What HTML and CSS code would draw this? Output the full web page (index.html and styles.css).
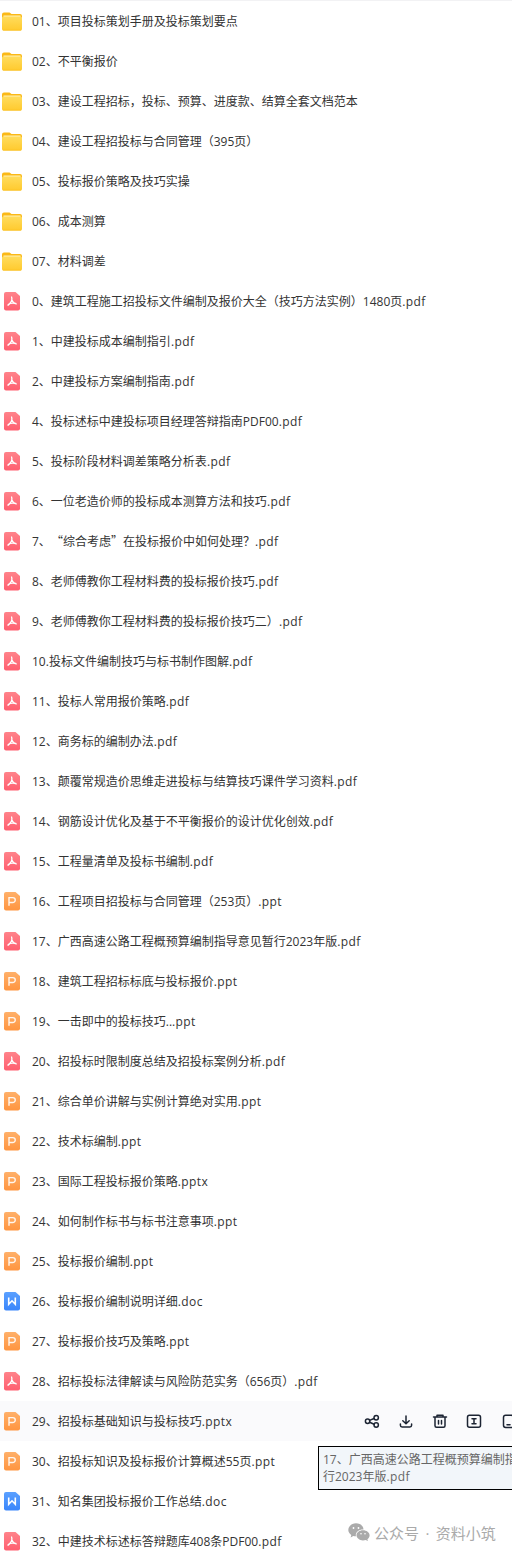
FILE: index.html
```
<!DOCTYPE html>
<html lang="zh-CN">
<head>
    <meta charset="UTF-8">
    <meta name="viewport" content="width=device-width, initial-scale=1.0">
    <title>文件列表</title>
    <link rel="stylesheet" href="styles.css">
</head>
<body>
    <svg class="sprite" aria-hidden="true">
        <defs>
            <linearGradient id="g-folder" x1="0" y1="0" x2="0" y2="1">
                <stop offset="0" stop-color="#ffdc5c"/>
                <stop offset="1" stop-color="#ffca2e"/>
            </linearGradient>
            <linearGradient id="g-pdf" x1="0" y1="0" x2="0" y2="1">
                <stop offset="0" stop-color="#ff838a"/>
                <stop offset="1" stop-color="#ff5f70"/>
            </linearGradient>
            <linearGradient id="g-ppt" x1="0" y1="0" x2="0" y2="1">
                <stop offset="0" stop-color="#ffb069"/>
                <stop offset="1" stop-color="#ff9540"/>
            </linearGradient>
            <linearGradient id="g-doc" x1="0" y1="0" x2="0" y2="1">
                <stop offset="0" stop-color="#5aa0ff"/>
                <stop offset="1" stop-color="#3a86fb"/>
            </linearGradient>
        </defs>
        <symbol id="folder" viewBox="0 0 24 24">
            <path d="M2 5.500q0-2 2-2h5.500l2 1.500H20q2 0 2 2V12H2z" fill="#fbb917"/>
            <path d="M3.500 6.500h17v3h-17z" fill="#fff0b8"/>
            <rect x="2" y="7.500" width="20" height="14" rx="1.500" fill="url(#g-folder)"/>
            <path d="M3 21.200h18" stroke="#fbbd1d" stroke-width=".7"/>
        </symbol>
        <symbol id="pdf" viewBox="0 0 24 24">
            <path d="M6 3h9.500L20 7v12.500a2 2 0 0 1-2 2H6a2 2 0 0 1-2-2V5a2 2 0 0 1 2-2z" fill="url(#g-pdf)"/>
            <path d="M11.600 8c.9 2.500.2 5.200-3.600 8.200M12 11.300c.8 2.200 2 3.200 4.200 3.600M8.200 15.500c2-1.300 4.500-1.700 7.600-1" fill="none" stroke="#fff" stroke-width="1.300" stroke-linecap="round"/>
        </symbol>
        <symbol id="ppt" viewBox="0 0 24 24">
            <path d="M6 3h9.500L20 7v12.500a2 2 0 0 1-2 2H6a2 2 0 0 1-2-2V5a2 2 0 0 1 2-2z" fill="url(#g-ppt)"/>
            <path d="M9 16.800V8.600h3.800a2.400 2.400 0 0 1 0 4.900H9" fill="none" stroke="#fff" stroke-opacity=".9" stroke-width="1.400"/>
        </symbol>
        <symbol id="doc" viewBox="0 0 24 24">
            <path d="M6 3h9.500L20 7v12.500a2 2 0 0 1-2 2H6a2 2 0 0 1-2-2V5a2 2 0 0 1 2-2z" fill="url(#g-doc)"/>
            <path d="M8.700 8.600v6.600L12 11.800l3.300 3.400V8.600" fill="none" stroke="#fff" stroke-width="1.600"/>
        </symbol>
    </svg>

    <div class="pagina">
    <ul class="lista">
        <li class="fila"><svg class="icono"><use href="#folder"/></svg><span class="nombre">01、项目投标策划手册及投标策划要点</span></li>
        <li class="fila"><svg class="icono"><use href="#folder"/></svg><span class="nombre">02、不平衡报价</span></li>
        <li class="fila"><svg class="icono"><use href="#folder"/></svg><span class="nombre">03、建设工程招标，投标、预算、进度款、结算全套文档范本</span></li>
        <li class="fila"><svg class="icono"><use href="#folder"/></svg><span class="nombre">04、建设工程招投标与合同管理（395页）</span></li>
        <li class="fila"><svg class="icono"><use href="#folder"/></svg><span class="nombre">05、投标报价策略及技巧实操</span></li>
        <li class="fila"><svg class="icono"><use href="#folder"/></svg><span class="nombre">06、成本测算</span></li>
        <li class="fila"><svg class="icono"><use href="#folder"/></svg><span class="nombre">07、材料调差</span></li>
        <li class="fila"><svg class="icono"><use href="#pdf"/></svg><span class="nombre">0、建筑工程施工招投标文件编制及报价大全（技巧方法实例）1480页<span class="ext">.pdf</span></span></li>
        <li class="fila"><svg class="icono"><use href="#pdf"/></svg><span class="nombre">1、中建投标成本编制指引<span class="ext">.pdf</span></span></li>
        <li class="fila"><svg class="icono"><use href="#pdf"/></svg><span class="nombre">2、中建投标方案编制指南<span class="ext">.pdf</span></span></li>
        <li class="fila"><svg class="icono"><use href="#pdf"/></svg><span class="nombre">4、投标述标中建投标项目经理答辩指南PDF00<span class="ext">.pdf</span></span></li>
        <li class="fila"><svg class="icono"><use href="#pdf"/></svg><span class="nombre">5、投标阶段材料调差策略分析表<span class="ext">.pdf</span></span></li>
        <li class="fila"><svg class="icono"><use href="#pdf"/></svg><span class="nombre">6、一位老造价师的投标成本测算方法和技巧<span class="ext">.pdf</span></span></li>
        <li class="fila"><svg class="icono"><use href="#pdf"/></svg><span class="nombre">7、<span class="cjk">“综合考虑”</span>在投标报价中如何处理？<span class="ext">.pdf</span></span></li>
        <li class="fila"><svg class="icono"><use href="#pdf"/></svg><span class="nombre">8、老师傅教你工程材料费的投标报价技巧<span class="ext">.pdf</span></span></li>
        <li class="fila"><svg class="icono"><use href="#pdf"/></svg><span class="nombre">9、老师傅教你工程材料费的投标报价技巧二）<span class="ext">.pdf</span></span></li>
        <li class="fila"><svg class="icono"><use href="#pdf"/></svg><span class="nombre">10.投标文件编制技巧与标书制作图解<span class="ext">.pdf</span></span></li>
        <li class="fila"><svg class="icono"><use href="#pdf"/></svg><span class="nombre">11、投标人常用报价策略<span class="ext">.pdf</span></span></li>
        <li class="fila"><svg class="icono"><use href="#pdf"/></svg><span class="nombre">12、商务标的编制办法<span class="ext">.pdf</span></span></li>
        <li class="fila"><svg class="icono"><use href="#pdf"/></svg><span class="nombre">13、颠覆常规造价思维走进投标与结算技巧课件学习资料<span class="ext">.pdf</span></span></li>
        <li class="fila"><svg class="icono"><use href="#pdf"/></svg><span class="nombre">14、钢筋设计优化及基于不平衡报价的设计优化创效<span class="ext">.pdf</span></span></li>
        <li class="fila"><svg class="icono"><use href="#pdf"/></svg><span class="nombre">15、工程量清单及投标书编制<span class="ext">.pdf</span></span></li>
        <li class="fila"><svg class="icono"><use href="#ppt"/></svg><span class="nombre">16、工程项目招投标与合同管理（253页）<span class="ext">.ppt</span></span></li>
        <li class="fila"><svg class="icono"><use href="#pdf"/></svg><span class="nombre">17、广西高速公路工程概预算编制指导意见暂行2023年版<span class="ext">.pdf</span></span></li>
        <li class="fila"><svg class="icono"><use href="#ppt"/></svg><span class="nombre">18、建筑工程招标标底与投标报价<span class="ext">.ppt</span></span></li>
        <li class="fila"><svg class="icono"><use href="#ppt"/></svg><span class="nombre">19、一击即中的投标技巧..<span class="ext">.ppt</span></span></li>
        <li class="fila"><svg class="icono"><use href="#pdf"/></svg><span class="nombre">20、招投标时限制度总结及招投标案例分析<span class="ext">.pdf</span></span></li>
        <li class="fila"><svg class="icono"><use href="#ppt"/></svg><span class="nombre">21、综合单价讲解与实例计算绝对实用<span class="ext">.ppt</span></span></li>
        <li class="fila"><svg class="icono"><use href="#ppt"/></svg><span class="nombre">22、技术标编制<span class="ext">.ppt</span></span></li>
        <li class="fila"><svg class="icono"><use href="#ppt"/></svg><span class="nombre">23、国际工程投标报价策略<span class="ext">.pptx</span></span></li>
        <li class="fila"><svg class="icono"><use href="#ppt"/></svg><span class="nombre">24、如何制作标书与标书注意事项<span class="ext">.ppt</span></span></li>
        <li class="fila"><svg class="icono"><use href="#ppt"/></svg><span class="nombre">25、投标报价编制<span class="ext">.ppt</span></span></li>
        <li class="fila"><svg class="icono"><use href="#doc"/></svg><span class="nombre">26、投标报价编制说明详细<span class="ext">.doc</span></span></li>
        <li class="fila"><svg class="icono"><use href="#ppt"/></svg><span class="nombre">27、投标报价技巧及策略<span class="ext">.ppt</span></span></li>
        <li class="fila"><svg class="icono"><use href="#pdf"/></svg><span class="nombre">28、招标投标法律解读与风险防范实务（656页）<span class="ext">.pdf</span></span></li>
        <li class="fila activa">
            <svg class="icono"><use href="#ppt"/></svg><span class="nombre">29、招投标基础知识与投标技巧<span class="ext">.pptx</span></span>
            <div class="acciones">
                <svg viewBox="0 0 16 16"><circle cx="3.600" cy="8.300" r="2.200"/><circle cx="12.200" cy="4.700" r="2.200"/><circle cx="12.200" cy="12" r="2.200"/><path d="M5.600 7.400 10 5.500M5.600 9.200l4.500 2"/></svg>
                <svg viewBox="0 0 16 16"><path d="M8 3v7.500M4.800 7.700 8 10.800l3.200-3.100M2.400 11v1.300q0 1.700 1.700 1.700h7.800q1.700 0 1.700-1.700V11"/></svg>
                <svg viewBox="0 0 16 16"><path d="M1.500 4h13M5 3.700V2.200h6v1.500M3 4.200v8.500q0 1.500 1.500 1.500h7q1.500 0 1.500-1.500V4.200M6.500 7.500v3.500M9.500 7.500v3.500"/></svg>
                <svg viewBox="0 0 16 16"><rect x="1.500" y="2.300" width="13" height="12" rx="2"/><path d="M6 5.800h4M6 10.800h4M8 5.800v5"/></svg>
                <svg viewBox="0 0 16 16"><rect x="3.500" y="2.300" width="10" height="12.200" rx="2.200"/><path d="M7 11.800h3"/></svg>
            </div>
        </li>
        <li class="fila"><svg class="icono"><use href="#ppt"/></svg><span class="nombre">30、招投标知识及投标报价计算概述55页<span class="ext">.ppt</span></span></li>
        <li class="fila"><svg class="icono"><use href="#doc"/></svg><span class="nombre">31、知名集团投标报价工作总结<span class="ext">.doc</span></span></li>
        <li class="fila"><svg class="icono"><use href="#pdf"/></svg><span class="nombre">32、中建技术标述标答辩题库408条PDF00<span class="ext">.pdf</span></span></li>
    </ul>

    <div class="tooltip">17、广西高速公路工程概预算编制指<br>行2023年版<span class="ext">.pdf</span></div>

    <div class="marca">
        <svg viewBox="0 0 22 18">
            <path d="M8 .3c4.300 0 7.500 2.700 7.500 6.200h-.7c-4 0-7 2.500-7 5.600 0 .5.100.8.200 1.200-1 0-1.900-.1-2.700-.4L2.600 14.500l.7-2.500C1.600 10.800.3 9 .3 7 .3 3.300 3.800.3 8 .3z"/>
            <path d="M15 7.200c3.600 0 6.600 2.200 6.600 5.100 0 1.600-.9 3-2.200 3.900l.5 1.700-2.200-1c-.8.300-1.700.5-2.700.5-3.600 0-6.500-2.300-6.500-5.100s2.900-5.100 6.500-5.100z"/>
            <g fill="#fff"><circle cx="5.500" cy="5" r=".9"/><circle cx="10.500" cy="5" r=".9"/><circle cx="13" cy="10.800" r=".8"/><circle cx="17" cy="10.800" r=".8"/></g>
        </svg>
        <span>公众号 · 资料小筑</span>
    </div>
    </div>
</body>
</html>
```
FILE: styles.css
```
body {
    margin: 0;
    background-color: #fff;
    color: #333;
    font-family: "Open Sans", "Noto Sans CJK SC", sans-serif;
    font-size: 12px;
    text-spacing-trim: space-all;
}

.sprite {
    position: absolute;
    width: 0;
    height: 0;
}

.pagina {
    position: relative;
    height: 1554px;
    overflow: hidden;
}

.lista {
    margin: 0;
    padding: 0;
    list-style: none;
    border-top: 1px solid #f2f2f4;
}

.fila {
    display: flex;
    align-items: center;
    height: 40px;
    line-height: 18px;
    white-space: nowrap;
}

.activa {
    background-color: #fafafc;
}

.icono {
    flex: none;
    width: 24px;
    height: 24px;
    margin-right: 8px;
}

.nombre {
    padding-top: 2px;
}

.ext {
    letter-spacing: 0.4px;
}

/* comillas de ancho completo */
.cjk {
    font-family: "Noto Sans CJK SC", sans-serif;
    line-height: 1;
}

.acciones {
    display: flex;
    gap: 18px;
    margin-left: auto;
    margin-right: -4px;
}

.acciones svg {
    width: 16px;
    height: 16px;
    fill: none;
    stroke: #1c2433;
    stroke-width: 1.5;
    stroke-linecap: round;
    stroke-linejoin: round;
}

.tooltip {
    position: absolute;
    top: 1446px;
    left: 318px;
    right: 0;
    box-sizing: border-box;
    height: 44px;
    padding: 4px 0 4px 4px;
    border: 1px solid #000;
    border-right: none;
    overflow: hidden;
    background-color: #f2f6fa;
    color: #666;
    line-height: 17px;
    white-space: nowrap;
}

.marca {
    position: absolute;
    top: 1520px;
    left: 348px;
    display: flex;
    align-items: center;
    gap: 4px;
    height: 24px;
    color: #aaa;
    font-size: 15px;
    word-spacing: 2.5px;
    white-space: nowrap;
}

.marca svg {
    width: 22px;
    height: 18px;
    fill: #aaa;
}
```
